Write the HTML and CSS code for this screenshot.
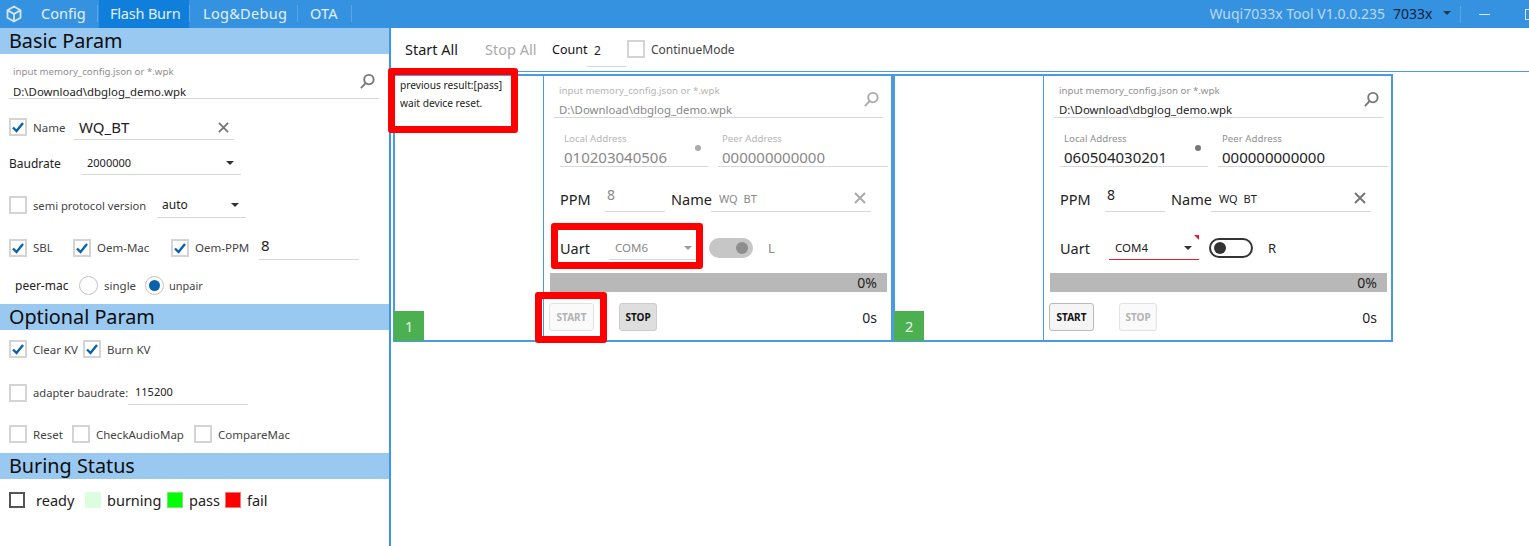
FILE: index.html
```html
<!DOCTYPE html>
<html lang="en">
  <head>
    <meta charset="UTF-8" />
    <title>Wuqi7033x Tool</title>
    <link rel="stylesheet" href="styles.css">
  </head>

  <body>
    <div class="app">
      <header class="topbar">
        <svg class="logo" viewBox="0 0 18 18"><path d="M9 1.5l6.5 3.7v7.6L9 16.5l-6.5-3.7V5.2zM2.8 5.4L9 9l6.2-3.6M9 9v7.2"/></svg>
        <div class="tab t-config">Config</div>
        <div class="tab t-flash active">Flash Burn</div>
        <div class="tab t-log">Log&amp;Debug</div>
        <div class="tab t-ota">OTA</div>
        <div class="title">Wuqi7033x Tool V1.0.0.235</div>
        <div class="chip">7033x</div>
        <span class="arrow dark"></span>
        <span class="win-sep"></span>
        <span class="win-min"></span>
        <span class="win-max"></span>
      </header>

      <div class="body">
        <aside class="side">
          <h2 class="head">Basic Param</h2>
          <div class="search side-search">
            <div class="hint">input memory_config.json or *.wpk</div>
            <div class="path">D:\Download\dbglog_demo.wpk</div>
            <svg class="lens" viewBox="0 0 18 18"><circle cx="10.5" cy="7" r="5"/><path d="M7 10.8L2 16"/></svg>
          </div>

          <div class="row r-name">
            <span class="box on"><svg viewBox="0 0 14 14"><path d="M2 7.5L5.5 11L12 3"/></svg></span>
            <span class="lbl name-lbl">Name</span>
            <div class="field f-name">WQ_BT<svg class="clear" viewBox="0 0 12 12"><path d="M1 1l10 10M11 1L1 11"/></svg></div>
          </div>
          <div class="row r-baud">
            <span class="lbl dark-lbl baud-lbl">Baudrate</span>
            <div class="field select f-baud">2000000<span class="arrow dark"></span></div>
          </div>
          <div class="row r-semi">
            <span class="box"></span>
            <span class="lbl semi-lbl">semi protocol version</span>
            <div class="field select f-semi">auto<span class="arrow dark"></span></div>
          </div>
          <div class="row r-sbl">
            <span class="box on"><svg viewBox="0 0 14 14"><path d="M2 7.5L5.5 11L12 3"/></svg></span>
            <span class="lbl sbl-lbl">SBL</span>
            <span class="box on"><svg viewBox="0 0 14 14"><path d="M2 7.5L5.5 11L12 3"/></svg></span>
            <span class="lbl mac-lbl">Oem-Mac</span>
            <span class="box on"><svg viewBox="0 0 14 14"><path d="M2 7.5L5.5 11L12 3"/></svg></span>
            <span class="lbl ppm-lbl">Oem-PPM</span>
            <div class="field f-ppm">8</div>
          </div>
          <div class="row r-peer">
            <span class="lbl dark-lbl peer-lbl">peer-mac</span>
            <span class="radio"></span>
            <span class="lbl single-lbl">single</span>
            <span class="radio on"></span>
            <span class="lbl unpair-lbl">unpair</span>
          </div>

          <h2 class="head head-opt">Optional Param</h2>
          <div class="row r-clear">
            <span class="box on"><svg viewBox="0 0 14 14"><path d="M2 7.5L5.5 11L12 3"/></svg></span>
            <span class="lbl clear-lbl">Clear KV</span>
            <span class="box on"><svg viewBox="0 0 14 14"><path d="M2 7.5L5.5 11L12 3"/></svg></span>
            <span class="lbl">Burn KV</span>
          </div>
          <div class="row r-adapter">
            <span class="box"></span>
            <span class="lbl adapter-lbl">adapter baudrate:</span>
            <div class="field f-adapter">115200</div>
          </div>
          <div class="row r-reset">
            <span class="box"></span>
            <span class="lbl reset-lbl">Reset</span>
            <span class="box"></span>
            <span class="lbl audio-lbl">CheckAudioMap</span>
            <span class="box"></span>
            <span class="lbl">CompareMac</span>
          </div>

          <h2 class="head head-status">Buring Status</h2>
          <div class="row r-status">
            <span class="swatch ready"></span><span class="st st-ready">ready</span>
            <span class="swatch burning"></span><span class="st st-burning">burning</span>
            <span class="swatch pass"></span><span class="st st-pass">pass</span>
            <span class="swatch fail"></span><span class="st">fail</span>
          </div>
        </aside>

        <main class="main">
          <div class="toolbar">
            <span class="tool">Start All</span>
            <span class="tool off">Stop All</span>
            <span class="count-lbl">Count</span>
            <div class="field f-count">2</div>
            <span class="box"></span>
            <span class="lbl cont-lbl">ContinueMode</span>
          </div>

          <div class="cards">
            <section class="card">
              <div class="info">
                <p>previous result:[pass]</p>
                <p>wait device reset.</p>
                <div class="badge">1</div>
              </div>
              <div class="panel disabled">
                <div class="search">
                  <div class="hint">input memory_config.json or *.wpk</div>
                  <div class="path">D:\Download\dbglog_demo.wpk</div>
                  <svg class="lens" viewBox="0 0 18 18"><circle cx="10.5" cy="7" r="5"/><path d="M7 10.8L2 16"/></svg>
                </div>
                <div class="addr">
                  <div class="addr-field a-local">
                    <div class="hint">Local Address</div>
                    <div class="addr-val">010203040506</div>
                    <span class="dot"></span>
                  </div>
                  <div class="addr-field a-peer">
                    <div class="hint">Peer Address</div>
                    <div class="addr-val">000000000000</div>
                  </div>
                </div>
                <div class="line ppm-line">
                  <span class="big b-ppm">PPM</span>
                  <div class="field p-ppm">8</div>
                  <span class="big b-name">Name</span>
                  <div class="field p-name">WQ BT<svg class="clear" viewBox="0 0 12 12"><path d="M1 1l10 10M11 1L1 11"/></svg></div>
                </div>
                <div class="line uart-line">
                  <span class="big b-uart">Uart</span>
                  <div class="field select p-uart">COM6<span class="arrow"></span></div>
                  <span class="switch on"><i></i></span>
                  <span class="side-mark">L</span>
                </div>
                <div class="progress">0%</div>
                <div class="actions">
                  <button class="btn b-start" disabled>START</button>
                  <button class="btn b-stop">STOP</button>
                  <span class="time">0s</span>
                </div>
              </div>
            </section>

            <section class="card">
              <div class="info">
                <div class="badge">2</div>
              </div>
              <div class="panel">
                <div class="search">
                  <div class="hint">input memory_config.json or *.wpk</div>
                  <div class="path">D:\Download\dbglog_demo.wpk</div>
                  <svg class="lens" viewBox="0 0 18 18"><circle cx="10.5" cy="7" r="5"/><path d="M7 10.8L2 16"/></svg>
                </div>
                <div class="addr">
                  <div class="addr-field a-local">
                    <div class="hint">Local Address</div>
                    <div class="addr-val">060504030201</div>
                    <span class="dot"></span>
                  </div>
                  <div class="addr-field a-peer">
                    <div class="hint">Peer Address</div>
                    <div class="addr-val">000000000000</div>
                  </div>
                </div>
                <div class="line ppm-line">
                  <span class="big b-ppm">PPM</span>
                  <div class="field p-ppm">8</div>
                  <span class="big b-name">Name</span>
                  <div class="field p-name">WQ BT<svg class="clear" viewBox="0 0 12 12"><path d="M1 1l10 10M11 1L1 11"/></svg></div>
                </div>
                <div class="line uart-line">
                  <span class="big b-uart">Uart</span>
                  <div class="field select p-uart invalid">COM4<span class="arrow dark"></span><span class="corner"></span></div>
                  <span class="switch"><i></i></span>
                  <span class="side-mark">R</span>
                </div>
                <div class="progress">0%</div>
                <div class="actions">
                  <button class="btn b-start">START</button>
                  <button class="btn b-stop" disabled>STOP</button>
                  <span class="time">0s</span>
                </div>
              </div>
            </section>
          </div>
        </main>
      </div>

      <div class="mark m-msg"></div>
      <div class="mark m-uart"></div>
      <div class="mark m-start"></div>
    </div>
  </body>
</html>
```

FILE: styles.css
```css
* {
  margin: 0;
  padding: 0;
  box-sizing: border-box;
  font-family: 'Noto Sans', sans-serif;
}

html,
body {
  height: 100%;
  overflow: hidden;
  background: #fff;
}

.app {
  position: relative;
  width: 1529px;
  height: 546px;
  display: flex;
  flex-direction: column;
}

/* top bar */
.topbar {
  height: 28px;
  flex: none;
  background: #3592e0;
  display: flex;
  align-items: center;
  color: #e3f0fb;
  font-size: 14.5px;
  overflow: hidden;
}

.logo {
  width: 18px;
  height: 18px;
  margin: 0 7px 0 5px;
  fill: none;
  stroke: #d5e7f8;
  stroke-width: 1.8;
}

.tab {
  height: 28px;
  line-height: 26px;
  padding: 0 11px;
  margin-right: 2px;
  position: relative;
  white-space: nowrap;
}

.tab::after {
  content: '';
  position: absolute;
  right: -1px;
  top: 5px;
  height: 17px;
  width: 1px;
  background: #5ba7e6;
}

.tab.active {
  background: #0f7fdb;
}

.t-config {
  width: 67px;
}

.t-flash {
  width: 90px;
  letter-spacing: -0.2px;
}

.t-log {
  width: 106px;
  padding-left: 12px;
  letter-spacing: 0.3px;
}

.t-ota {
  width: 52px;
  letter-spacing: 0.2px;
}

.title {
  margin-left: auto;
  padding-bottom: 1px;
  color: #bcd9f5;
  font-size: 14px;
}

.chip {
  margin-left: 8px;
  padding-bottom: 1px;
  color: #10233a;
  font-size: 14px;
  width: 47px;
}

.arrow {
  position: absolute;
  right: 7px;
  top: 50%;
  margin-top: -2px;
  width: 0;
  height: 0;
  border-left: 4px solid transparent;
  border-right: 4px solid transparent;
  border-top: 4px solid #999;
}

.arrow.dark {
  border-top-color: #333;
}

.topbar .arrow {
  position: static;
  margin: 0 0 2px 3px;
  border-top-color: #27384a;
}

.win-sep {
  width: 1px;
  height: 17px;
  background: #5ba7e6;
  margin-left: 9px;
}

.win-min {
  width: 11px;
  height: 1px;
  background: #d5e7f8;
  margin-left: 18px;
}

.win-max {
  width: 11px;
  height: 11px;
  border: 1px solid #d5e7f8;
  margin: 0 -7px 0 35px;
  flex: none;
}

.body {
  flex: 1;
  display: flex;
  min-height: 0;
}

/* left column */
.side {
  width: 391px;
  flex: none;
  border-right: 2px solid #3d97e2;
}

.head {
  height: 26px;
  background: #99c9f0;
  color: #0c0c0c;
  font-size: 19.8px;
  font-weight: 400;
  line-height: 26px;
  padding-left: 9px;
}

.head-opt {
  margin-top: 7px;
}

.head-status {
  margin-top: 10px;
}

.search {
  position: relative;
  display: flex;
  flex-direction: column;
  justify-content: flex-end;
  height: 42px;
  width: 329px;
  margin-left: 10px;
  padding: 0 4px 1px 5px;
  border-bottom: 1px solid #d8d8d8;
}

.side-search {
  width: 370px;
  height: 45px;
  margin-left: 9px;
  padding: 0 4px;
}

.hint {
  font-size: 9.7px;
  line-height: 14px;
  color: #8f8f8f;
  white-space: nowrap;
}

.path {
  font-size: 11.4px;
  line-height: 13px;
  margin-top: 5px;
  color: #222;
}

.side-search .path {
  margin-top: 6px;
}

.lens {
  position: absolute;
  right: 3px;
  top: 15px;
  width: 17px;
  height: 17px;
  fill: none;
  stroke: #777;
  stroke-width: 2;
}

.side-search .lens {
  top: 19px;
}

.row {
  display: flex;
  align-items: center;
  margin-left: 9px;
}

.r-name {
  height: 26px;
  margin-top: 15px;
}

.r-baud {
  height: 24px;
  margin-top: 11px;
}

.r-semi {
  height: 26px;
  margin-top: 17px;
}

.r-sbl {
  height: 25px;
  margin-top: 17px;
}

.r-peer {
  height: 24px;
  margin-top: 13px;
}

.r-clear {
  height: 18px;
  margin-top: 10px;
}

.r-adapter {
  height: 24px;
  margin-top: 23px;
}

.r-reset {
  height: 18px;
  margin-top: 20px;
}

.r-status {
  height: 16px;
  margin-top: 13px;
}

.box {
  width: 18px;
  height: 18px;
  flex: none;
  border: 2px solid #d4d4d4;
  background: #fff;
}

.box svg {
  display: block;
  width: 14px;
  height: 14px;
  fill: none;
  stroke: #0a62ad;
  stroke-width: 2.4;
}

.lbl {
  font-size: 11.5px;
  color: #444;
  white-space: nowrap;
}

.dark-lbl {
  color: #222;
  font-size: 12px;
}

.name-lbl {
  margin-left: 6px;
  width: 41px;
}

.baud-lbl {
  width: 72px;
}

.semi-lbl {
  margin-left: 6px;
  width: 124px;
  font-size: 11.2px;
}

.sbl-lbl {
  margin-left: 6px;
  width: 40px;
}

.mac-lbl {
  margin-left: 6px;
  width: 74px;
}

.ppm-lbl {
  margin-left: 6px;
  width: 64px;
}

.peer-lbl {
  margin-left: 6px;
  width: 64px;
}

.single-lbl {
  margin-left: 6px;
  width: 41px;
}

.unpair-lbl {
  margin-left: 5px;
  font-size: 11px;
}

.clear-lbl {
  margin-left: 6px;
  width: 50px;
}

.adapter-lbl {
  margin-left: 6px;
  width: 95px;
  font-size: 11.2px;
  padding-bottom: 1px;
}

.reset-lbl {
  margin-left: 6px;
  width: 39px;
}

.audio-lbl {
  margin-left: 6px;
  width: 98px;
}

.radio {
  width: 19px;
  height: 19px;
  flex: none;
  margin-right: 0;
  border-radius: 50%;
  border: 1px solid #c4c4c4;
  position: relative;
}

.radio.on::after {
  content: '';
  position: absolute;
  left: 3px;
  top: 3px;
  width: 11px;
  height: 11px;
  border-radius: 50%;
  background: #0a62ad;
}

.r-clear .lbl:last-child,
.r-reset .lbl:last-child {
  margin-left: 6px;
}

.field {
  position: relative;
  height: 100%;
  border-bottom: 1px solid #d8d8d8;
  display: flex;
  align-items: center;
  font-size: 12px;
  color: #222;
  padding-left: 4px;
}

.clear {
  position: absolute;
  right: 5px;
  top: 8px;
  width: 11px;
  height: 11px;
  stroke: #777;
  stroke-width: 2;
}

.f-name {
  width: 160px;
  font-size: 15px;
  padding-left: 5px;
}

.f-baud {
  width: 160px;
  padding-left: 6px;
  font-size: 11px;
}

.f-semi {
  width: 89px;
  padding-left: 5px;
}

.f-ppm {
  width: 100px;
  font-size: 15px;
  padding: 0 0 4px 2px;
}

.f-adapter {
  width: 120px;
  font-size: 11px;
  padding: 0 0 2px 7px;
}

.swatch {
  width: 16px;
  height: 16px;
  flex: none;
}

.swatch.ready {
  border: 2px solid #555;
}

.swatch.burning {
  background: #ddfde0;
}

.swatch.pass {
  background: #00ff00;
  border: 1px solid #7de27d;
}

.swatch.fail {
  background: #ff0000;
  border: 1px solid #f07a7a;
}

.st {
  font-size: 14.5px;
  color: #222;
  margin-left: 6px;
}

.st-ready {
  margin-left: 11px;
  width: 49px;
}

.st-burning {
  width: 60px;
}

.st-pass {
  width: 36px;
}

/* right side */
.main {
  flex: 1;
  min-width: 0;
}

.toolbar {
  height: 44px;
  display: flex;
  align-items: center;
  border-bottom: 1px solid #4a9ce2;
  padding: 0 0 1px 14px;
}

.tool {
  font-size: 14.5px;
  color: #1a1a1a;
  width: 80px;
}

.tool.off {
  color: #aaa;
  width: 67px;
}

.count-lbl {
  font-size: 12.5px;
  color: #111;
  width: 35px;
}

.f-count {
  width: 40px;
  height: 24px;
  font-size: 12px;
  margin-top: 11px;
  padding: 0 0 8px 7px;
}

.cont-lbl {
  margin-left: 6px;
  font-size: 12px;
}

.cards {
  display: flex;
  margin: 2px 0 0 2px;
}

.card {
  width: 500px;
  height: 268px;
  display: flex;
  border: 2px solid #4a9ce2;
}

.info {
  width: 148px;
  flex: none;
  display: flex;
  flex-direction: column;
}

.info p {
  font-size: 10.2px;
  line-height: 18px;
  color: #222;
  margin-left: 5px;
  white-space: nowrap;
}

.badge {
  margin: auto 0 -1px -1px;
  width: 30px;
  height: 30px;
  background: #4caf50;
  color: #e8f5e9;
  font-size: 14.5px;
  line-height: 30px;
  padding-left: 11px;
}

.panel {
  flex: 1;
  border-left: 1px solid #4a9ce2;
  min-width: 0;
}

.disabled .path,
.disabled .addr-val,
.disabled .field,
.disabled .side-mark {
  color: #888;
}

.disabled .hint {
  color: #b5b5b5;
}

.disabled .lens,
.disabled .clear {
  stroke: #aaa;
}

.addr {
  display: flex;
  margin: 14px 0 0 16px;
  gap: 10px;
}

.addr-field {
  position: relative;
  height: 35px;
  border-bottom: 1px solid #d8d8d8;
  padding-left: 4px;
}

.a-local {
  width: 148px;
}

.a-peer {
  width: 170px;
}

.addr-val {
  font-size: 15px;
  line-height: 20px;
  margin-top: 1px;
  color: #222;
}

.dot {
  position: absolute;
  right: 7px;
  top: 13px;
  width: 6px;
  height: 6px;
  border-radius: 50%;
  background: #777;
}

.disabled .dot {
  background: #aaa;
}

.line {
  display: flex;
  align-items: center;
  margin-left: 16px;
}

.ppm-line {
  height: 26px;
  margin-top: 19px;
}

.uart-line {
  height: 24px;
  margin-top: 24px;
}

.big {
  font-size: 14.5px;
  color: #222;
}

.b-ppm {
  width: 45px;
}

.b-name {
  width: 40px;
  margin-left: 6px;
}

.b-uart {
  width: 49px;
}

.p-ppm {
  width: 60px;
  font-size: 14px;
  padding: 0 0 8px 2px;
}

.p-name {
  width: 160px;
  font-size: 11px;
  padding-left: 8px;
  word-spacing: 3px;
}

.p-name .clear {
  width: 12px;
  height: 12px;
  top: 6px;
  right: 5px;
}

.p-uart {
  width: 90px;
  font-size: 11.5px;
  padding-left: 6px;
}

.invalid {
  border-bottom-color: #e3202e;
}

.corner {
  position: absolute;
  right: 0;
  top: -1px;
  width: 0;
  height: 0;
  border-top: 5px solid #e3202e;
  border-left: 5px solid transparent;
}

.switch {
  position: relative;
  width: 44px;
  height: 20px;
  margin-left: 10px;
  border: 2px solid #333;
  border-radius: 10px;
}

.switch i {
  position: absolute;
  left: 3px;
  top: 2px;
  width: 12px;
  height: 12px;
  border-radius: 50%;
  background: #333;
}

.switch.on {
  border: 0;
  background: #c6c6c6;
}

.switch.on i {
  left: auto;
  right: 5px;
  top: 4px;
  background: #8e8e8e;
}

.side-mark {
  font-size: 13px;
  color: #222;
  margin-left: 15px;
}

.progress {
  width: 337px;
  height: 19px;
  margin: 13px 0 0 6px;
  padding-right: 10px;
  background: #b8b8b8;
  text-align: right;
  font-size: 14px;
  line-height: 19px;
  color: #222;
}

.actions {
  display: flex;
  align-items: center;
  height: 28px;
  margin: 11px 0 0 5px;
}

.btn {
  height: 28px;
  border: 1px solid #bbb;
  border-radius: 3px;
  background: #f5f5f5;
  color: #111;
  font-size: 10px;
  font-weight: 700;
}

.b-start {
  width: 45px;
}

.b-stop {
  width: 38px;
  margin-left: 25px;
  border-color: #ccc;
  background: #dedede;
}

.btn:disabled {
  background: #fafafa;
  border-color: #e2e2e2;
  color: #b2b2b2;
}

.time {
  margin-left: auto;
  margin-right: 14px;
  font-size: 14px;
  color: #222;
}

/* red highlights drawn over the screenshot */
.mark {
  position: absolute;
  border: 7px solid #fe0000;
  border-radius: 3px;
}

.m-msg {
  left: 388px;
  top: 68px;
  width: 130px;
  height: 65px;
}

.m-uart {
  left: 551px;
  top: 223px;
  width: 152px;
  height: 46px;
}

.m-start {
  left: 535px;
  top: 292px;
  width: 72px;
  height: 51px;
}
```
